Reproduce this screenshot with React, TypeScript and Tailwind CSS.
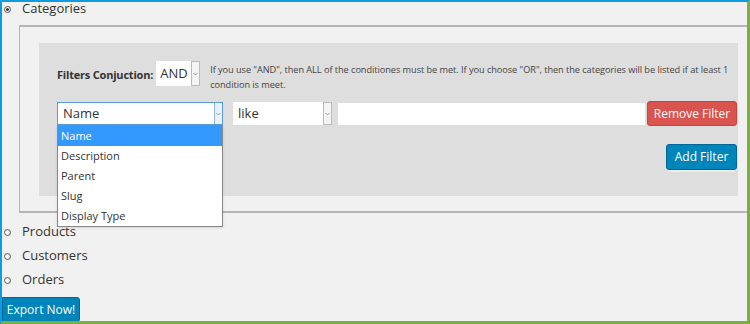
import React from "react";

const font = "font-['Segoe_UI','Open_Sans','Noto_Sans',sans-serif]";

const Radio = ({ checked }: { checked?: boolean }) => (
  <span className="flex h-[7px] w-[7px] items-center justify-center rounded-full border border-[#555] bg-white">
    {checked && <span className="h-[3px] w-[3px] rounded-full bg-[#333]" />}
  </span>
);

const Caret = () => (
  <svg width="5" height="4" viewBox="0 0 5 4">
    <path d="M0.5 1 L2.5 3 L4.5 1" fill="none" stroke="#888" strokeWidth="0.8" />
  </svg>
);

const options = ["Name", "Description", "Parent", "Slug", "Display Type"];

const App = () => {
  return (
    <div
      className={`h-[324px] w-[750px] overflow-hidden border-t-2 border-l-2 border-r-[3px] border-b-[3px] border-t-[#0e9be2] border-l-[#0e9be2] border-r-[#78b13d] border-b-[#78b13d] bg-[#f1f1f1] text-[#333] ${font}`}
    >
      <div className="flex h-[14px] items-center gap-[11px] pl-[2px] text-[13px]">
        <Radio checked />
        <span>Categories</span>
      </div>

      <div className="ml-[17px] mt-[9px] h-[188px] border-t-2 border-l border-b-2 border-[#b4b4b4] pl-[19px] pt-[16px] pr-[9px]">
        <div className="h-[153px] bg-[#dedede] pl-[18px] pr-[1px] pt-[18px]">
          <div className="flex items-start">
            <span className="mt-[6px] shrink-0 whitespace-nowrap text-[11px] font-bold tracking-[-0.2px]">Filters Conjuction:</span>
            <div className="ml-[3px] flex h-[25px] w-[44px] shrink-0 bg-white">
              <span className="flex flex-1 items-center pl-[4px] text-[13px]">AND</span>
              <span className="flex w-[9px] items-center justify-center border border-[#bbb] bg-[#f4f4f4]">
                <Caret />
              </span>
            </div>
            <p className="ml-[10px] mt-[1px] text-[9.2px] leading-[15px] tracking-[-0.05px] text-[#444]">
              If you use "AND", then ALL of the conditiones must be met. If you choose "OR", then the categories will be listed if at least 1 condition is meet.
            </p>
          </div>

          <div className="mt-[9px] flex items-center">
            <div className="relative flex h-[23px] w-[166px] border border-[#5b9dd9] bg-white">
              <span className="flex flex-1 items-center pl-[5px] text-[13px]">Name</span>
              <span className="flex w-[8px] items-center justify-center border-l border-[#8ab6e0] bg-[#e9f2fb]">
                <Caret />
              </span>
              <ul className="absolute left-[-1px] top-[22px] z-10 w-[166px] border border-[#888] bg-white text-[11px] shadow-sm">
                {options.map((o, i) => (
                  <li
                    key={o}
                    className={`flex h-[20px] items-center pl-[3px] ${i === 0 ? "bg-[#3399ff] text-white" : ""}`}
                  >
                    {o}
                  </li>
                ))}
              </ul>
            </div>
            <div className="ml-[10px] flex h-[23px] w-[99px] bg-white">
              <span className="flex flex-1 items-center pl-[5px] text-[13px]">like</span>
              <span className="flex w-[9px] items-center justify-center border border-[#bbb] bg-[#f4f4f4]">
                <Caret />
              </span>
            </div>
            <div className="ml-[6px] h-[22px] w-[307px] bg-white" />
            <button className="ml-[2px] flex h-[25px] w-[90px] items-center justify-center rounded-[3px] border border-[#d43f3a] bg-[#d9534f] text-[12px] text-white">
              Remove Filter
            </button>
          </div>

          <div className="mt-[18px] flex justify-end">
            <button className="flex h-[26px] w-[71px] items-center justify-center rounded-[3px] border border-[#006799] bg-[#0085ba] text-[12px] text-white shadow-[0_4px_0_-2px_#ececec]">
              Add Filter
            </button>
          </div>
        </div>
      </div>

      <div className="mt-[12px] flex flex-col gap-[10px] pl-[2px] text-[13px]">
        {["Products", "Customers", "Orders"].map((t) => (
          <div key={t} className="flex h-[14px] items-center gap-[11px]">
            <Radio />
            <span>{t}</span>
          </div>
        ))}
      </div>

      <button className="mt-[10px] flex h-[25px] w-[78px] items-center justify-center rounded-r-[3px] border border-[#006799] bg-[#0085ba] text-[12px] text-white">
        Export Now!
      </button>
    </div>
  );
};

export default App;
